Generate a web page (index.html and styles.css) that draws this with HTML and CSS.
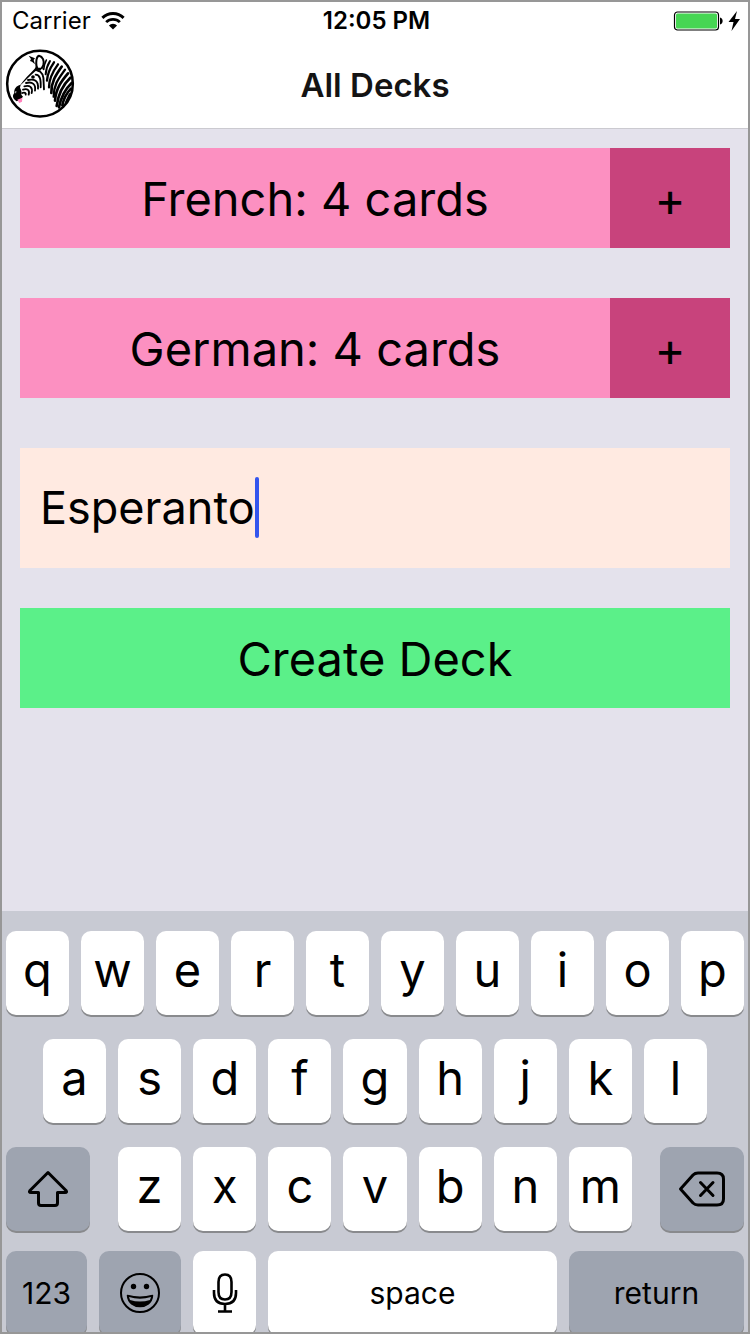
FILE: index.html
```html
<!DOCTYPE html>
<html lang="en">
<head>
<meta charset="utf-8">
<meta name="viewport" content="width=device-width, initial-scale=1">
<title>All Decks</title>
<link rel="stylesheet" href="styles.css">
</head>
<body>
<div class="screen">
  <header class="header">
    <div class="status">
      <div class="status-side">
        <span>Carrier</span>
        <svg class="wifi" viewBox="0 0 26 20" aria-hidden="true">
          <path d="M1.500 6.600A16.500 16.500 0 0 1 24.500 6.600" fill="none" stroke="#000" stroke-width="3.200"/>
          <path d="M5.600 11.200A10.500 10.500 0 0 1 20.400 11.200" fill="none" stroke="#000" stroke-width="3"/>
          <path d="M8.600 14.800A6 6 0 0 1 17.400 14.800L13 19.300Z"/>
        </svg>
      </div>
      <time class="clock">12:05 PM</time>
      <div class="status-side status-right">
        <svg class="battery" viewBox="0 0 68 20" aria-hidden="true">
          <rect x="1.500" y="1" width="44" height="18" rx="3" fill="#fff" stroke="#000" stroke-width="1.200"/>
          <rect x="3" y="2.500" width="41" height="15" rx="1.500" fill="#46d653"/>
          <path d="M47 6.500C50.500 7 50.500 13 47 13.500Z"/>
          <path d="M64 0L55.500 11H60.500L58.500 20L67 8H62Z"/>
        </svg>
      </div>
    </div>
    <div class="nav">
      <button class="logo" type="button" aria-label="Home">
        <svg viewBox="15 15 210 210" aria-hidden="true">
          <circle cx="120" cy="119" r="98.500" fill="#fff" stroke="#000" stroke-width="7.500"/>
          <path d="M86 35L105 43L101 48L105 61L96 53L90 51L93 45Z"/>
          <path d="M110 70C107 55 109 37 117 35C128 37 134 51 130 64L124 75" fill="none" stroke="#000" stroke-width="6"/>
          <path d="M58 127C72 106 88 91 104 74L110 64L115 71L126 71L121 80L107 81C91 95 76 110 58 127Z"/>
          <circle cx="99" cy="99" r="5.500"/>
          <g fill="none" stroke="#000" stroke-width="5.500" stroke-linecap="round">
            <path d="M112 80C125 82 132 97 131 118L132 136"/>
            <path d="M107 92C120 92 123 107 122 130"/>
            <path d="M84 108C103 104 116 110 114 134"/>
            <path d="M78 117C98 112 108 121 105 140"/>
            <path d="M73 127C89 122 99 130 95 147"/>
            <path d="M69 137C82 132 90 139 86 152"/>
            <path d="M67 147C73 144 79 147 77 152"/>
          </g>
          <path d="M62 122C48 125 41 136 43 147C36 155 38 164 50 172L60 168L69 158L64 152C66 143 63 137 60 131Z"/>
          <path d="M45 143L49 141L48 149Z" fill="#fff"/>
          <path d="M52 167L67 161L66 173L58 177Z" fill="#ff80bb"/>
          <g fill="none" stroke="#000" stroke-linecap="round">
            <path d="M139 48C134 58 132 67 131 76" stroke-width="5"/>
            <path d="M150 51C142 64 138 76 137 91" stroke-width="6"/>
            <path d="M162 55C151 71 142 89 141 110" stroke-width="7"/>
            <path d="M174 61C160 80 147 103 147 130" stroke-width="7"/>
            <path d="M185 68C169 91 153 113 154 147" stroke-width="8"/>
            <path d="M195 77C179 100 161 119 161 158" stroke-width="7"/>
            <path d="M204 88C187 108 168 131 165 170" stroke-width="8"/>
            <path d="M211 101C192 119 176 142 170 186" stroke-width="8"/>
            <path d="M215 117C198 133 184 155 177 190" stroke-width="8"/>
            <path d="M213 134C199 148 191 164 187 184" stroke-width="8"/>
            <path d="M210 151L199 174" stroke-width="8"/>
          </g>
        </svg>
      </button>
      <h1 class="title">All Decks</h1>
    </div>
  </header>

  <main class="content">
    <div class="deck">
      <button class="deck-name" type="button">French: 4 cards</button>
      <button class="deck-add" type="button" aria-label="Add card to French">+</button>
    </div>
    <div class="deck">
      <button class="deck-name" type="button">German: 4 cards</button>
      <button class="deck-add" type="button" aria-label="Add card to German">+</button>
    </div>
    <form class="new-deck">
      <label class="field">
        <input class="field-input" type="text" value="Esperanto" aria-label="Deck name">
        <span class="caret"></span>
      </label>
      <button class="create" type="button">Create Deck</button>
    </form>
  </main>

  <section class="keyboard" aria-label="Keyboard">
    <div class="keys">
      <button class="key" type="button">q</button><button class="key" type="button">w</button><button class="key" type="button">e</button><button class="key" type="button">r</button><button class="key" type="button">t</button><button class="key" type="button">y</button><button class="key" type="button">u</button><button class="key" type="button">i</button><button class="key" type="button">o</button><button class="key" type="button">p</button>
    </div>
    <div class="keys keys-middle">
      <button class="key" type="button">a</button><button class="key" type="button">s</button><button class="key" type="button">d</button><button class="key" type="button">f</button><button class="key" type="button">g</button><button class="key" type="button">h</button><button class="key" type="button">j</button><button class="key" type="button">k</button><button class="key" type="button">l</button>
    </div>
    <div class="keys keys-lower">
      <button class="key key-dark key-side" type="button" aria-label="Shift">
        <svg class="icon" viewBox="0 0 48 44" aria-hidden="true"><path d="M24 5.500L6 23.500Q4.500 25.500 7 25.500H14.500V36Q14.500 38.500 17 38.500H31Q33.500 38.500 33.500 36V25.500H41Q43.500 25.500 42 23.500Z" fill="none" stroke="#000" stroke-width="3" stroke-linejoin="round"/></svg>
      </button>
      <div class="keys letters">
        <button class="key" type="button">z</button><button class="key" type="button">x</button><button class="key" type="button">c</button><button class="key" type="button">v</button><button class="key" type="button">b</button><button class="key" type="button">n</button><button class="key" type="button">m</button>
      </div>
      <button class="key key-dark key-side" type="button" aria-label="Delete">
        <svg class="icon" viewBox="0 0 48 44" aria-hidden="true"><path d="M2.500 22L15 8Q17 6 20 6H39Q45.500 6 45.500 12V32Q45.500 38 39 38H20Q17 38 15 36ZM22.500 15.500L35 28.500M35 15.500L22.500 28.500" fill="none" stroke="#000" stroke-width="3" stroke-linecap="round" stroke-linejoin="round"/></svg>
      </button>
    </div>
    <div class="keys keys-bottom">
      <button class="key key-dark key-word key-number" type="button">123</button>
      <button class="key key-dark key-emoji" type="button" aria-label="Emoji">
        <svg class="icon" viewBox="0 0 48 44" aria-hidden="true"><circle cx="24" cy="22" r="19" fill="none" stroke="#000" stroke-width="2"/><circle cx="17.500" cy="15.500" r="2.700"/><circle cx="30.500" cy="15.500" r="2.700"/><path d="M11.500 24.500Q24 28 36.500 24.500C36 32 30 35.500 24 35.500S12 32 11.500 24.500Z" stroke="#000" stroke-width="1.500" stroke-linejoin="round"/><path d="M13 26Q24 29.500 35 26L34 29Q24 32 14 29Z" fill="#9ea4b0"/></svg>
      </button>
      <button class="key key-mic" type="button" aria-label="Dictate">
        <svg class="icon" viewBox="0 0 48 44" aria-hidden="true"><path d="M24 3.500Q30.500 3.500 30.500 11V21Q30.500 28.500 24 28.500T17.500 21V11Q17.500 3.500 24 3.500ZM13 19V22Q13 33 24 33T35 22V19M24 33V40M17 40.500H31" fill="none" stroke="#000" stroke-width="2.600"/></svg>
      </button>
      <button class="key key-word key-space" type="button">space</button>
      <button class="key key-dark key-word key-return" type="button">return</button>
    </div>
  </section>
</div>
</body>
</html>
```
FILE: styles.css
```css
* {
  box-sizing: border-box;
}

body {
  margin: 0;
  font-family: Inter, "Liberation Sans", sans-serif;
  color: #000;
}

button,
input {
  margin: 0;
  padding: 0;
  border: 0;
  border-radius: 0;
  font: inherit;
  color: inherit;
}

svg {
  display: block;
}

.screen {
  display: flex;
  flex-direction: column;
  height: 100vh;
  overflow: hidden;
  border: 2px solid #979797;
  background: #e4e2ec;
}

.header {
  border-bottom: 1px solid #cbcad0;
  background: #fff;
}

.status {
  display: grid;
  grid-template-columns: 1fr auto 1fr;
  align-items: center;
  height: 38px;
  padding: 0 7px 0 10px;
  font-size: 24px;
  line-height: 28px;
}

.status-side {
  display: flex;
  align-items: center;
  gap: 10px;
}

.status-right {
  justify-content: flex-end;
}

.wifi {
  width: 24px;
  height: 20px;
}

.battery {
  width: 68px;
  height: 20px;
}

.clock {
  font-weight: 600;
}

.nav {
  display: grid;
  grid-template-columns: 1fr auto 1fr;
  align-items: center;
  height: 88px;
  padding: 0 3px;
}

.logo {
  width: 70px;
  background: none;
}

.title {
  margin: 0;
  padding-top: 2px;
  font-size: 33px;
  line-height: 40px;
  font-weight: 600;
  color: #141414;
}

.content {
  flex: 1;
  padding: 19px 18px;
  font-size: 47px;
}

.deck {
  display: flex;
  height: 100px;
  margin-bottom: 50px;
}

.deck-name {
  flex: 1;
  background: #fc90c1;
}

.deck-add {
  width: 120px;
  background: #c8437c;
}

.new-deck {
  display: flex;
  flex-direction: column;
  gap: 40px;
}

.field {
  display: flex;
  align-items: center;
  height: 120px;
  padding: 0 20px 2px;
  background: #ffeae1;
}

.field-input {
  field-sizing: content;
  font-size: 45px;
  background: none;
  outline: none;
}

.caret {
  width: 4px;
  height: 61px;
  border-radius: 2px;
  background: #3355ee;
}

.create {
  height: 100px;
  background: #5bf089;
}

.keyboard {
  display: flex;
  flex-direction: column;
  gap: 24px;
  height: 421px;
  padding: 20px 4px 0;
  overflow: hidden;
  background: #c8cad3;
}

.keys {
  display: flex;
  flex-shrink: 0;
  gap: 12px;
}

.keys-middle {
  padding: 0 37px;
}

.keys-lower {
  gap: 28px;
}

.keys-bottom {
  margin-top: -4px;
}

.letters {
  flex: 514 1 0;
}

.key {
  display: flex;
  flex: 1 1 0;
  align-items: center;
  justify-content: center;
  min-width: 0;
  height: 84px;
  padding-bottom: 7px;
  border-radius: 10px;
  background: #fff;
  box-shadow: 0 2px 0 #898a8d;
  font-size: 47px;
  font-weight: 400;
  line-height: 56px;
}

.key-dark {
  background: #9ea4b0;
}

.key-side {
  flex: 84 1 0;
  padding: 0;
}

.key-word {
  padding: 0;
  font-size: 30px;
}

.key-number {
  flex: 81 1 0;
}

.key-emoji {
  flex: 82 1 0;
  padding: 0;
}

.key-mic {
  flex: 63 1 0;
  padding: 0;
}

.key-space {
  flex: 289 1 0;
}

.key-return {
  flex: 175 1 0;
}

.icon {
  flex-shrink: 0;
  width: 48px;
  height: 44px;
}
```
